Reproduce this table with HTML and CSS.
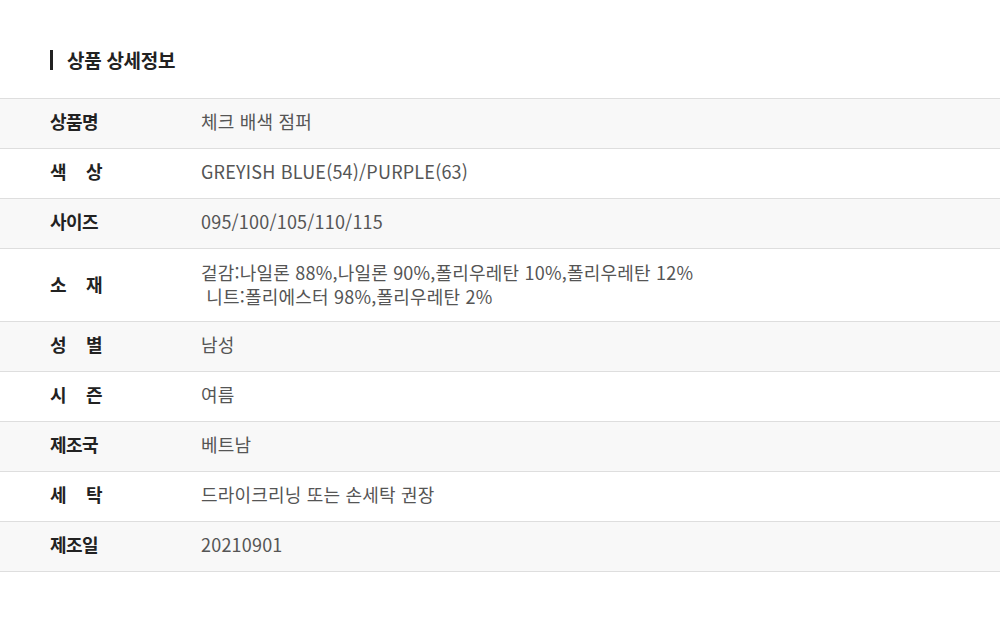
FILE: index.html
```html
<!DOCTYPE html>
<html lang="ko">
<head>
<meta charset="utf-8">
<link rel="stylesheet" href="styles.css">
</head>
<body>
<div class="page">
  <h2 class="title">상품 상세정보</h2>
  <div class="table">
    <div class="row alt"><div class="label">상품명</div><div class="value">체크 배색 점퍼</div></div>
    <div class="row"><div class="label">색 상</div><div class="value">GREYISH BLUE(54)/PURPLE(63)</div></div>
    <div class="row alt"><div class="label">사이즈</div><div class="value">095/100/105/110/115</div></div>
    <div class="row tall"><div class="label">소 재</div><div class="value">겉감:나일론 88%,나일론 90%,폴리우레탄 10%,폴리우레탄 12%<br>&nbsp;니트:폴리에스터 98%,폴리우레탄 2%</div></div>
    <div class="row alt"><div class="label">성 별</div><div class="value">남성</div></div>
    <div class="row"><div class="label">시 즌</div><div class="value">여름</div></div>
    <div class="row alt"><div class="label">제조국</div><div class="value">베트남</div></div>
    <div class="row"><div class="label">세 탁</div><div class="value">드라이크리닝 또는 손세탁 권장</div></div>
    <div class="row alt"><div class="label">제조일</div><div class="value">20210901</div></div>
  </div>
</div>
</body>
</html>
```
FILE: styles.css
```css
html, body {
  margin: 0;
  padding: 0;
  background: #fff;
}
body {
  font-family: "Noto Sans CJK KR", "Noto Sans", sans-serif;
  color: #222;
}
.page {
  padding-top: 50px;
}
.title {
  margin: 0 0 28px 50px;
  padding-left: 14px;
  border-left: 3px solid #222;
  font-size: 19px;
  font-weight: 700;
  line-height: 20px;
  height: 20px;
  letter-spacing: -0.3px;
  color: #222;
  display: flex;
  align-items: center;
}
.table {
  border-top: 1px solid #dedede;
}
.row {
  display: flex;
  align-items: center;
  height: 44px;
  padding-bottom: 5px;
  border-bottom: 1px solid #dedede;
  background: #fff;
}
.row.alt {
  background: #f8f8f8;
}
.row.tall {
  height: 69px;
  padding-bottom: 3px;
}
.label {
  width: 52px;
  margin-left: 50px;
  margin-right: 99px;
  font-size: 18px;
  font-weight: 700;
  color: #222;
  text-align: justify;
  text-align-last: justify;
  letter-spacing: -0.5px;
  white-space: nowrap;
}
.value {
  font-size: 18px;
  color: #555;
  letter-spacing: 0.2px;
  line-height: 24px;
}
```
